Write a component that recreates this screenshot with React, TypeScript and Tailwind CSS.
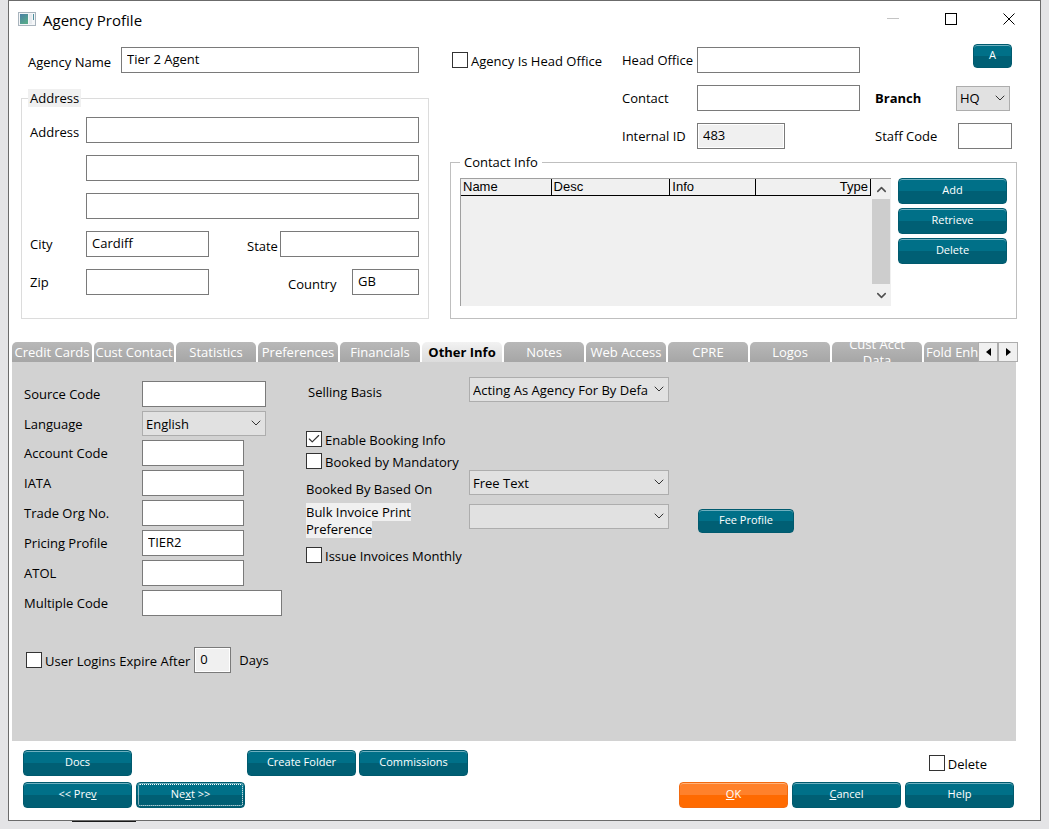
import React from 'react';
import clsx from 'clsx';
import { ChevronDown, ChevronUp, Check } from 'lucide-react';

const TABS = [
  'Credit Cards',
  'Cust Contact',
  'Statistics',
  'Preferences',
  'Financials',
  'Other Info',
  'Notes',
  'Web Access',
  'CPRE',
  'Logos',
  'Cust Acct Data',
  'Fold Enh',
];

const CODE_FIELDS = [
  { id: 'accountCode', label: 'Account Code', value: '', width: 'w-[102px]' },
  { id: 'iata', label: 'IATA', value: '', width: 'w-[102px]' },
  { id: 'tradeOrg', label: 'Trade Org No.', value: '', width: 'w-[102px]' },
  { id: 'pricingProfile', label: 'Pricing Profile', value: 'TIER2', width: 'w-[102px]' },
  { id: 'atol', label: 'ATOL', value: '', width: 'w-[102px]' },
  { id: 'multipleCode', label: 'Multiple Code', value: '', width: 'w-[140px]' },
];

interface LabelProps {
  htmlFor: string;
  className?: string;
  children: React.ReactNode;
}

const Label: React.FC<LabelProps> = ({ htmlFor, className, children }) => (
  <label htmlFor={htmlFor} className={clsx('shrink-0 whitespace-nowrap', className)}>
    {children}
  </label>
);

interface FieldProps {
  id: string;
  value?: string;
  className?: string;
  readOnly?: boolean;
  label?: string;
}

const Field: React.FC<FieldProps> = ({ id, value = '', className, readOnly, label }) => (
  <input
    id={id}
    type="text"
    defaultValue={value}
    readOnly={readOnly}
    aria-label={label}
    className={clsx(
      'h-[26px] min-w-0 border border-[#7a7a7a] px-[5px] pb-[2px] outline-none',
      readOnly ? 'bg-[#f0f0f0] shadow-[inset_0_0_0_1px_#ffffff]' : 'bg-white',
      className
    )}
  />
);

interface SelectProps {
  id: string;
  options: string[];
  className?: string;
}

const Select: React.FC<SelectProps> = ({ id, options, className }) => (
  <div className={clsx('relative h-[25px] shrink-0', className)}>
    <select
      id={id}
      className="h-full w-full appearance-none border border-[#adadad] bg-[#e1e1e1] pl-[3px] pr-[20px] outline-none"
    >
      {options.map((option) => (
        <option key={option}>{option}</option>
      ))}
    </select>
    <ChevronDown
      size={16}
      strokeWidth={1.5}
      className="pointer-events-none absolute right-[2px] top-1 text-[#333333]"
    />
  </div>
);

interface CheckboxProps {
  label: string;
  checked?: boolean;
}

const Checkbox: React.FC<CheckboxProps> = ({ label, checked }) => (
  <label className="flex h-4 items-center gap-[3px] whitespace-nowrap">
    <span className="relative h-4 w-4 shrink-0">
      <input
        type="checkbox"
        defaultChecked={checked}
        className="peer block h-4 w-4 appearance-none border border-[#333333] bg-white"
      />
      <Check
        size={14}
        strokeWidth={2}
        className="pointer-events-none absolute left-px top-px hidden text-[#333333] peer-checked:block"
      />
    </span>
    <span className="pt-[2px]">{label}</span>
  </label>
);

interface ButtonProps {
  className?: string;
  primary?: boolean;
  children: React.ReactNode;
}

const Button: React.FC<ButtonProps> = ({ className, primary, children }) => (
  <button
    type="button"
    className={clsx(
      'shrink-0 rounded border pb-[2px] text-[11px] leading-4 text-white',
      primary
        ? 'border-[#f26a10] bg-linear-to-b from-[#ff812b] from-50% to-[#ff6a00] to-50% shadow-[inset_0_1px_0_#ffb27a]'
        : 'border-[#005a6e] bg-linear-to-b from-[#007088] from-50% to-[#005f74] to-50% shadow-[inset_0_1px_0_#6fb0bf]',
      className
    )}
  >
    {children}
  </button>
);

const TitleBar: React.FC = () => (
  <header className="flex h-9 items-center pl-[9px] pr-[2px]">
    <svg width="18" height="14" viewBox="0 0 18 14">
      <defs>
        <linearGradient id="appIcon" x1="0" y1="0" x2="0.6" y2="1">
          <stop offset="0" stopColor="#4a7fa5" />
          <stop offset="1" stopColor="#56a98a" />
        </linearGradient>
      </defs>
      <rect x="0.5" y="0.5" width="17" height="13" fill="#f4f6f8" stroke="#a9b4bd" />
      <rect x="2" y="2" width="8" height="10" fill="url(#appIcon)" />
      <rect x="11" y="2" width="3" height="10" fill="#e6eaee" />
      <rect x="15" y="2" width="1" height="6" fill="#4f8f9c" />
    </svg>
    <h1 className="ml-[7px] flex-1 pt-px text-[15px]">Agency Profile</h1>
    <button type="button" aria-label="Minimize" className="flex h-full w-[58px] items-center justify-center">
      <svg width="12" height="12" viewBox="0 0 12 12">
        <path d="M0 5.5h12" stroke="#c4c4c4" />
      </svg>
    </button>
    <button type="button" aria-label="Maximize" className="flex h-full w-[58px] items-center justify-center">
      <svg width="12" height="12" viewBox="0 0 12 12">
        <rect x="0.5" y="0.5" width="11" height="11" fill="none" stroke="#000000" />
      </svg>
    </button>
    <button type="button" aria-label="Close" className="flex h-full w-[58px] items-center justify-center">
      <svg width="12" height="12" viewBox="0 0 12 12">
        <path d="M0.5 0.5l11 11M11.5 0.5l-11 11" stroke="#000000" />
      </svg>
    </button>
  </header>
);

const AddressPanel: React.FC = () => (
  <div className="flex flex-col gap-4">
    <div className="flex items-center pl-[7px] pr-[10px]">
      <Label htmlFor="agencyName" className="w-[93px] pt-1">
        Agency Name
      </Label>
      <Field id="agencyName" value="Tier 2 Agent" className="flex-1" />
    </div>

    <fieldset className="flex-1 border border-[#dcdcdc] pl-2 pr-[9px]">
      <legend className="-ml-[2px] bg-[#f0f0f0] px-[2px] leading-[18px]">Address</legend>
      <div className="flex flex-col gap-3 pt-[10px]">
        <div className="flex items-center">
          <Label htmlFor="address1" className="w-14 pt-1">
            Address
          </Label>
          <Field id="address1" className="flex-1" />
        </div>
        <Field id="address2" label="Address line 2" className="ml-14" />
        <Field id="address3" label="Address line 3" className="ml-14" />
        <div className="flex items-center">
          <Label htmlFor="city" className="w-14">
            City
          </Label>
          <Field id="city" value="Cardiff" className="w-[123px]" />
          <Label htmlFor="state" className="ml-auto w-[33px] pt-1">
            State
          </Label>
          <Field id="state" className="w-[139px]" />
        </div>
        <div className="flex items-center">
          <Label htmlFor="zip" className="w-14">
            Zip
          </Label>
          <Field id="zip" className="w-[123px]" />
          <Label htmlFor="country" className="ml-auto w-16 pt-1">
            Country
          </Label>
          <Field id="country" value="GB" className="w-[67px]" />
        </div>
      </div>
    </fieldset>
  </div>
);

const ContactTable: React.FC = () => (
  <div className="flex min-w-0 flex-1 border-l border-t border-[#a0a0a0] bg-[#f0f0f0]">
    <div className="min-w-0 flex-1">
      <table className="w-full table-fixed border-collapse font-['Liberation_Sans',Arial,sans-serif] text-[13px] leading-4">
        <thead>
          <tr className="border-b border-black text-left">
            <th className="w-[22%] border-r border-black px-[2px] py-0 font-normal">Name</th>
            <th className="w-[29%] border-r border-black px-[2px] py-0 font-normal">Desc</th>
            <th className="w-[21%] border-r border-black px-[2px] py-0 font-normal">Info</th>
            <th className="border-r border-black px-[2px] py-0 text-right font-normal">Type</th>
          </tr>
        </thead>
        <tbody />
      </table>
    </div>
    <div className="flex w-5 flex-col items-center text-[#505050]">
      <button type="button" aria-label="Scroll up" className="flex h-5 items-center">
        <ChevronUp size={15} strokeWidth={2.5} />
      </button>
      <div className="w-[18px] flex-1 bg-[#cdcdcd]" />
      <button type="button" aria-label="Scroll down" className="flex h-[22px] items-center">
        <ChevronDown size={15} strokeWidth={2.5} />
      </button>
    </div>
  </div>
);

const OfficePanel: React.FC = () => (
  <div className="flex flex-col gap-1">
    <div className="grid grid-cols-[minmax(0,1fr)_75px_163px_15px_137px] items-center gap-y-3 pr-[5px]">
      <div className="pb-px pl-[2px]">
        <Checkbox label="Agency Is Head Office" />
      </div>
      <Label htmlFor="headOffice">Head Office</Label>
      <Field id="headOffice" />
      <Button className="col-start-5 -mt-2 h-6 w-[39px] justify-self-end">A</Button>

      <Label htmlFor="contact" className="col-start-2">
        Contact
      </Label>
      <Field id="contact" />
      <div className="col-start-5 flex items-center justify-between pr-[2px]">
        <Label htmlFor="branch" className="font-bold">
          Branch
        </Label>
        <Select id="branch" options={['HQ']} className="w-[54px]" />
      </div>

      <Label htmlFor="internalId" className="col-start-2">
        Internal ID
      </Label>
      <Field id="internalId" value="483" readOnly className="w-[88px]" />
      <div className="col-start-5 flex items-center justify-between">
        <Label htmlFor="staffCode">Staff Code</Label>
        <Field id="staffCode" className="w-[54px]" />
      </div>
    </div>

    <fieldset className="flex-1 border border-[#bfbfbf] px-[9px] pb-3">
      <legend className="px-1 leading-[18px]">Contact Info</legend>
      <div className="flex gap-[7px] pt-[7px]">
        <ContactTable />
        <div className="flex h-32 flex-col gap-1">
          <Button className="h-[26px] w-[109px]">Add</Button>
          <Button className="h-[26px] w-[109px]">Retrieve</Button>
          <Button className="h-[26px] w-[109px]">Delete</Button>
        </div>
      </div>
    </fieldset>
  </div>
);

interface TabStripProps {
  active: string;
  onSelect: (tab: string) => void;
}

const TabStrip: React.FC<TabStripProps> = ({ active, onSelect }) => (
  <div className="-mr-[2px] flex h-5">
    <div role="tablist" className="flex min-w-0 flex-1 gap-[2px] overflow-hidden">
      {TABS.map((tab) => (
        <button
          key={tab}
          type="button"
          role="tab"
          aria-selected={tab === active}
          onClick={() => onSelect(tab)}
          className={clsx(
            'flex h-5 shrink-0 items-center justify-center overflow-hidden rounded-t-[5px] text-[13px] leading-4',
            tab.length > 12 ? 'w-[90px] px-4' : 'w-20 whitespace-nowrap',
            tab === 'Fold Enh' && 'justify-start pl-[2px]',
            tab === active
              ? 'bg-linear-to-b from-[#f2f2f2] to-[#dcdcdc] font-bold text-black'
              : 'bg-linear-to-b from-[#b8b8b8] to-[#a6a6a6] text-white'
          )}
        >
          {tab}
        </button>
      ))}
    </div>
    <button
      type="button"
      aria-label="Scroll tabs left"
      className="flex w-5 items-center justify-center border border-[#adadad] bg-[#f0f0f0]"
    >
      <svg width="5" height="8" viewBox="0 0 5 8">
        <path d="M5 0v8L0 4z" />
      </svg>
    </button>
    <button
      type="button"
      aria-label="Scroll tabs right"
      className="flex w-5 items-center justify-center border border-[#adadad] bg-[#f0f0f0]"
    >
      <svg width="5" height="8" viewBox="0 0 5 8">
        <path d="M0 0v8l5-4z" />
      </svg>
    </button>
  </div>
);

const OtherInfo: React.FC = () => (
  <div className="flex flex-1 bg-[#d2d2d2] pl-3 pt-[15px]">
    <div className="w-[282px] shrink-0 pt-1">
      <div className="flex flex-col gap-1">
        <div className="flex items-center">
          <Label htmlFor="sourceCode" className="w-[118px]">
            Source Code
          </Label>
          <Field id="sourceCode" className="w-[124px]" />
        </div>
        <div className="flex items-center">
          <Label htmlFor="language" className="w-[118px]">
            Language
          </Label>
          <Select id="language" options={['English']} className="w-[124px]" />
        </div>
        {CODE_FIELDS.map((field) => (
          <div key={field.id} className="flex items-center">
            <Label htmlFor={field.id} className="w-[118px]">
              {field.label}
            </Label>
            <Field id={field.id} value={field.value} className={field.width} />
          </div>
        ))}
      </div>

      <div className="mt-[31px] flex items-center pl-[2px]">
        <Checkbox label="User Logins Expire After" />
        <Field id="expireDays" value="0" readOnly className="ml-1 w-[37px]" />
        <Label htmlFor="expireDays" className="ml-2">
          Days
        </Label>
      </div>
    </div>

    <div>
      <div className="flex items-center">
        <Label htmlFor="sellingBasis" className="w-[163px] pl-[2px] pt-1">
          Selling Basis
        </Label>
        <Select id="sellingBasis" options={['Acting As Agency For By Defa']} className="w-[200px]" />
      </div>

      <div className="mt-[29px] flex flex-col items-start gap-[6px]">
        <Checkbox label="Enable Booking Info" checked />
        <Checkbox label="Booked by Mandatory" />
      </div>

      <div className="mt-px flex h-[25px] items-center">
        <Label htmlFor="bookedBy" className="w-[163px] pt-3">
          Booked By Based On
        </Label>
        <Select id="bookedBy" options={['Free Text']} className="w-[200px]" />
      </div>

      <div className="mt-[9px] flex items-start">
        <label htmlFor="bulkInvoice" className="w-[163px] leading-[17px]">
          <span className="bg-[#f0f0f0]">
            Bulk Invoice Print
            <br />
            Preference
          </span>
        </label>
        <Select id="bulkInvoice" options={['']} className="w-[200px]" />
        <Button className="ml-[29px] mt-[5px] h-6 w-24">Fee Profile</Button>
      </div>

      <div className="mt-[9px] flex">
        <Checkbox label="Issue Invoices Monthly" />
      </div>
    </div>
  </div>
);

const Footer: React.FC = () => (
  <footer className="flex flex-col gap-[6px] pb-3 pl-[14px] pr-[26px] pt-[9px]">
    <div className="flex items-center">
      <Button className="h-[26px] w-[109px]">Docs</Button>
      <Button className="ml-[115px] h-[26px] w-[109px]">Create Folder</Button>
      <Button className="ml-[3px] h-[26px] w-[109px]">Commissions</Button>
      <div className="ml-auto pr-[27px]">
        <Checkbox label="Delete" />
      </div>
    </div>
    <div className="flex items-center gap-1">
      <Button className="h-[26px] w-[109px]">
        &lt;&lt; Pre<u>v</u>
      </Button>
      <Button className="h-[26px] w-[109px] outline-1 -outline-offset-3 outline-dotted outline-white">
        Ne<u>x</u>t &gt;&gt;
      </Button>
      <Button primary className="ml-auto h-[26px] w-[109px]">
        <u>O</u>K
      </Button>
      <Button className="h-[26px] w-[109px]">
        <u>C</u>ancel
      </Button>
      <Button className="h-[26px] w-[109px]">Help</Button>
    </div>
  </footer>
);

export const App: React.FC = () => {
  const [tab, setTab] = React.useState('Other Info');

  return (
    <div className="flex min-h-screen flex-col bg-[#e4e4e6] px-2 pb-[7px] font-['Open_Sans','Noto_Sans',sans-serif] text-[13px] leading-[18px] text-black">
      <main className="flex flex-1 flex-col border border-[#6b6b6b] bg-white">
        <TitleBar />
        <div className="grid grid-cols-[minmax(0,408fr)_minmax(0,567fr)] gap-[21px] pl-3 pr-[23px] pt-[10px]">
          <AddressPanel />
          <OfficePanel />
        </div>
        <div className="mt-[23px] flex flex-1 flex-col pl-[3px] pr-6">
          <TabStrip active={tab} onSelect={setTab} />
          <OtherInfo />
        </div>
        <Footer />
      </main>
      {/* Edge of the window behind */}
      <div className="ml-16 h-px w-16 bg-[#1a1a1a]" />
    </div>
  );
};

export default App;
